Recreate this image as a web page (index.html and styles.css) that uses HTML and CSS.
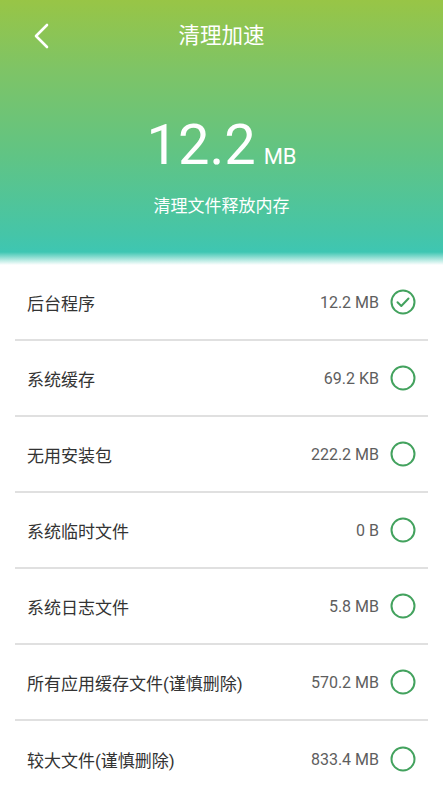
FILE: index.html
```html
<!DOCTYPE html>
<html lang="zh">
<head>
<meta charset="utf-8">
<link rel="stylesheet" href="styles.css">
</head>
<body>
<div class="page">
  <header class="hero">
    <div class="topbar">
      <svg class="back" width="20" height="28" viewBox="0 0 20 28"><path d="M15 3 L4 14 L15 25" fill="none" stroke="#fff" stroke-width="2.6" stroke-linecap="round" stroke-linejoin="round"/></svg>
      <div class="title">清理加速</div>
    </div>
    <div class="amount"><span class="num">12.2</span><span class="unit">MB</span></div>
    <div class="sub">清理文件释放内存</div>
  </header>
  <ul class="list">
    <li class="row"><span class="label">后台程序</span><span class="size">12.2 MB</span>
      <svg class="chk" width="28" height="28" viewBox="0 0 28 28"><circle cx="14" cy="14" r="11.5" fill="none" stroke="#43a25e" stroke-width="2"/><path d="M8.5 14.2 L12.3 18 L19.5 10.5" fill="none" stroke="#43a25e" stroke-width="2" stroke-linecap="round" stroke-linejoin="round"/></svg></li>
    <li class="row"><span class="label">系统缓存</span><span class="size">69.2 KB</span>
      <svg class="chk" width="28" height="28" viewBox="0 0 28 28"><circle cx="14" cy="14" r="11.5" fill="none" stroke="#43a25e" stroke-width="2"/></svg></li>
    <li class="row"><span class="label">无用安装包</span><span class="size">222.2 MB</span>
      <svg class="chk" width="28" height="28" viewBox="0 0 28 28"><circle cx="14" cy="14" r="11.5" fill="none" stroke="#43a25e" stroke-width="2"/></svg></li>
    <li class="row"><span class="label">系统临时文件</span><span class="size">0 B</span>
      <svg class="chk" width="28" height="28" viewBox="0 0 28 28"><circle cx="14" cy="14" r="11.5" fill="none" stroke="#43a25e" stroke-width="2"/></svg></li>
    <li class="row"><span class="label">系统日志文件</span><span class="size">5.8 MB</span>
      <svg class="chk" width="28" height="28" viewBox="0 0 28 28"><circle cx="14" cy="14" r="11.5" fill="none" stroke="#43a25e" stroke-width="2"/></svg></li>
    <li class="row"><span class="label">所有应用缓存文件(谨慎删除)</span><span class="size">570.2 MB</span>
      <svg class="chk" width="28" height="28" viewBox="0 0 28 28"><circle cx="14" cy="14" r="11.5" fill="none" stroke="#43a25e" stroke-width="2"/></svg></li>
    <li class="row"><span class="label">较大文件(谨慎删除)</span><span class="size">833.4 MB</span>
      <svg class="chk" width="28" height="28" viewBox="0 0 28 28"><circle cx="14" cy="14" r="11.5" fill="none" stroke="#43a25e" stroke-width="2"/></svg></li>
  </ul>
</div>
</body>
</html>
```
FILE: styles.css
```css
* { box-sizing: border-box; }
html, body { margin: 0; padding: 0; background: #fff; }
body { font-family: Roboto, "Noto Sans CJK SC", sans-serif; width: 443px; height: 793px; overflow: hidden; }
.page { width: 443px; }
.hero {
  height: 265px;
  background: linear-gradient(to bottom, #98c546 0px, #7ec466 70px, #62c482 150px, #45c5a8 235px, #3ec6b2 252px, #ffffff 265px);
  color: #fff;
  display: flex;
  flex-direction: column;
  align-items: center;
}
.topbar { width: 100%; height: 74px; display: flex; align-items: center; justify-content: center; position: relative; }
.back { position: absolute; left: 32px; top: 22px; }
.title { font-size: 21.5px; line-height: 26px; margin-top: -2px; }
.amount { margin-top: 43px; display: flex; align-items: baseline; line-height: 1; }
.num { font-size: 56px; font-weight: 400; letter-spacing: 0; }
.unit { font-size: 22px; margin-left: 8px; }
.sub { margin-top: 21px; font-size: 17px; line-height: 24px; }
.list { list-style: none; margin: 0; padding: 0 15px; }
.row {
  height: 76px;
  display: flex;
  align-items: center;
  border-bottom: 2px solid #e0e0e0;
  padding: 0 0 0 12px;
}
.row:last-child { border-bottom: none; }
.label { flex: 1; font-size: 17px; color: #333; }
.size { font-size: 16px; color: #5e5e5e; margin-right: 10px; }
.chk { margin-right: 11px; }
```
